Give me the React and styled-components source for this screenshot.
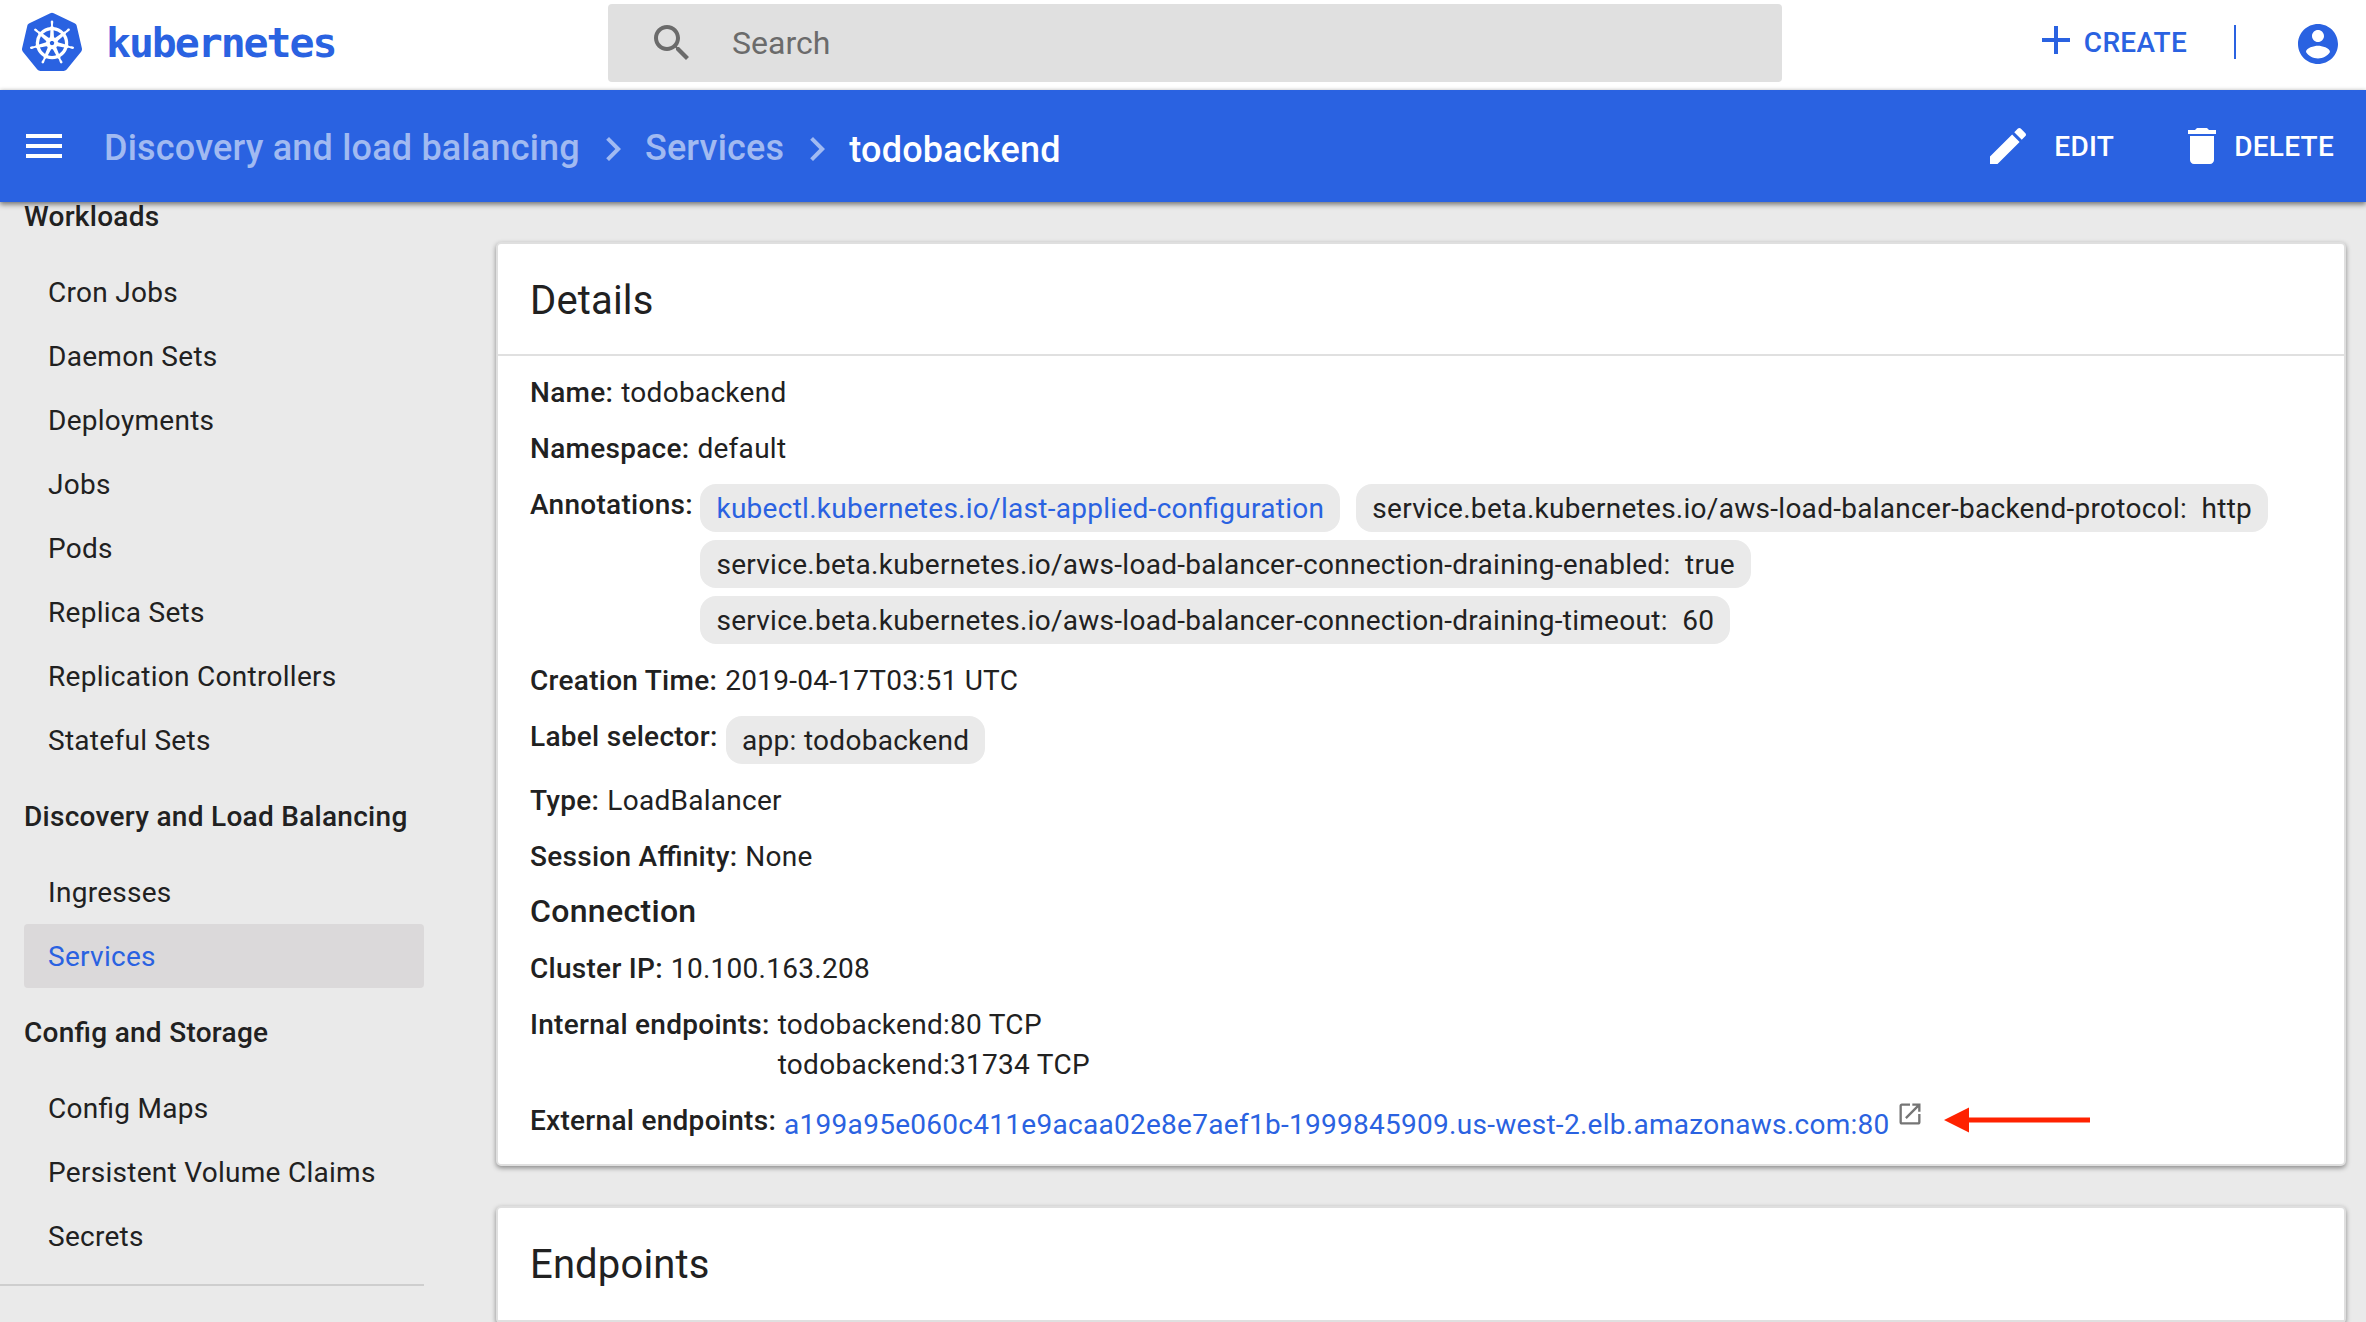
import React from "react";
import styled, { createGlobalStyle } from "styled-components";
import { SiKubernetes } from "react-icons/si";

const blue = "#2a62e1";
const ink = "#212121";

const GlobalStyle = createGlobalStyle`
  * { box-sizing: border-box; }
  body {
    margin: 0;
    background: #eaeaea;
    color: ${ink};
    font-family: Roboto, "Liberation Sans", sans-serif;
    font-size: 28px;
    letter-spacing: 0.28px;
    font-feature-settings: "liga" 1;
  }
`;

const Page = styled.div`
  display: flex;
  flex-direction: column;
  width: 2366px;
  height: 1322px;
  overflow: hidden;
`;

const TopBar = styled.header`
  display: flex;
  align-items: center;
  flex: none;
  height: 90px;
  background: #fff;
`;

const Brand = styled.a`
  display: flex;
  align-items: center;
  width: 608px;
  height: 84px;
  padding-left: 22px;
  align-self: flex-start;
  color: ${blue};
`;

const Wordmark = styled.span`
  margin: 1px 0 0 24px;
  font: bold 41.5px "DejaVu Sans Mono", monospace;
  letter-spacing: -2.05px;
`;

const SearchBox = styled.div`
  display: flex;
  align-items: center;
  align-self: flex-start;
  width: 1174px;
  height: 78px;
  margin-top: 4px;
  padding: 0 40px;
  border-radius: 4px;
  background: #e0e0e0;
  color: #6b6b6b;
  font-size: 32px;
  letter-spacing: 0;
`;

const SearchText = styled.span`
  margin-left: 36px;
`;

const Icon = styled.svg`
  flex: none;
  width: ${(p) => p.$size || 48}px;
  height: ${(p) => p.$size || 48}px;
  fill: currentColor;
`;

const AddIcon = styled(Icon)`
  margin-top: -4px;
`;

const TopActions = styled.div`
  display: flex;
  align-items: center;
  align-self: flex-start;
  height: 84px;
  margin-left: auto;
  padding: 4px 24px 0 0;
  color: ${blue};
`;

const Action = styled.button`
  display: flex;
  align-items: center;
  gap: ${(p) => p.$gap}px;
  margin-top: ${(p) => (p.$raise ? -4 : 0)}px;
  padding: 0;
  border: 0;
  background: none;
  color: inherit;
  font: 500 28px Roboto, sans-serif;
  letter-spacing: 0.28px;
`;

const Separator = styled.i`
  width: 2px;
  height: 34px;
  margin: -4px 58px 0 47px;
  background: ${blue};
`;

const ActionBar = styled.nav`
  display: flex;
  align-items: center;
  flex: none;
  height: 112px;
  padding: 0 32px 0 20px;
  background: ${blue};
  color: #fff;
  box-shadow: 0 0 4px rgba(0, 0, 0, 0.2), 0 3px 5px rgba(0, 0, 0, 0.4);
  z-index: 1;
`;

const Crumbs = styled.div`
  display: flex;
  align-items: center;
  margin: 4px 0 0 36px;
  font-size: 36px;
  font-weight: 500;
  letter-spacing: 0.2px;
  line-height: 48px;
`;

const Crumb = styled.span`
  padding-top: ${(p) => (p.$current ? 4 : 0)}px;
  color: ${(p) => (p.$current ? "#fff" : "rgba(255, 255, 255, 0.56)")};
`;

const CrumbArrow = styled(Icon)`
  margin: 2px 8px 0 9px;
  color: rgba(255, 255, 255, 0.56);
`;

const BarActions = styled.div`
  display: flex;
  align-items: center;
  gap: 64px;
  height: 100%;
  margin-left: auto;
`;

const Body = styled.div`
  display: flex;
  flex: 1;
  min-height: 0;
`;

const Sidebar = styled.aside`
  flex: none;
  width: 424px;
`;

const NavList = styled.div`
  padding-bottom: 16px;
  border-bottom: 2px solid #cecece;
`;

const NavHeading = styled.div`
  height: ${(p) => (p.$first ? 58 : 88)}px;
  padding-left: 24px;
  font-weight: 500;
  line-height: ${(p) => (p.$first ? 30 : 90)}px;
`;

const NavItem = styled.a`
  display: block;
  height: 64px;
  margin-left: 24px;
  padding-left: 24px;
  border-radius: 4px;
  line-height: 66px;
  background: ${(p) => (p.$active ? "#dbd9da" : "transparent")};
  color: ${(p) => (p.$active ? blue : ink)};
`;

const Content = styled.main`
  display: flex;
  flex-direction: column;
  flex: 1;
  gap: 40px;
  padding: 40px 20px 0 72px;
`;

const Card = styled.section`
  flex: none;
  border: 2px solid #dfdfdf;
  border-radius: 5px;
  background: #fff;
  box-shadow: 0 2px 5px rgba(0, 0, 0, 0.42);
`;

const CardTitle = styled.h2`
  height: ${(p) => p.$height || 112}px;
  margin: 0;
  padding-left: 32px;
  border-bottom: 2px solid #e0e0e0;
  font-size: 40px;
  font-weight: 400;
  letter-spacing: 0.15px;
  line-height: 114px;
`;

const CardBody = styled.div`
  display: flex;
  flex-direction: column;
  gap: 16px;
  padding: 16px 32px;
  line-height: 42px;
`;

const Entry = styled.div`
  display: flex;
  gap: 8px;
`;

const Label = styled.span`
  flex: none;
  height: 40px;
  font-weight: 500;
`;

const Value = styled.span`
  display: block;
  height: 40px;
`;

const SubTitle = styled.h3`
  height: 40px;
  margin: 0;
  font-size: 32px;
  font-weight: 500;
  line-height: 38px;
  letter-spacing: 0.32px;
`;

const ChipList = styled.div`
  display: flex;
  flex-wrap: wrap;
  gap: 8px 16px;
  margin-left: -1px;
`;

const Chip = styled.span`
  height: 48px;
  padding: 4px 15.5px 0 16.5px;
  border-radius: 16px;
  background: #eaeaea;
  white-space: pre;
  color: ${(p) => (p.$link ? blue : ink)};
`;

const Lines = styled.div`
  display: flex;
  flex-direction: column;
`;

const Endpoint = styled.a`
  display: flex;
  height: 48px;
  padding-top: 4px;
  color: ${blue};
`;

const OpenIcon = styled(Icon)`
  margin: -4px 0 0 6px;
  color: #757575;
`;

const Arrow = styled.svg`
  flex: none;
  width: 146px;
  height: 26px;
  margin: 7px 0 0 12px;
`;

const paths = {
  search:
    "M15.5 14h-.79l-.28-.27C15.41 12.59 16 11.11 16 9.5 16 5.91 13.09 3 9.5 3S3 5.91 3 9.5 5.91 16 9.5 16c1.61 0 3.09-.59 4.23-1.57l.27.28v.79l5 4.99L20.49 19l-4.99-5zm-6 0C7.01 14 5 11.99 5 9.5S7.01 5 9.5 5 14 7.01 14 9.5 11.99 14 9.5 14z",
  add: "M19 13h-6v6h-2v-6H5v-2h6V5h2v6h6v2z",
  account:
    "M12 2C6.48 2 2 6.48 2 12s4.48 10 10 10 10-4.48 10-10S17.52 2 12 2zm0 3c1.66 0 3 1.34 3 3s-1.34 3-3 3-3-1.34-3-3 1.34-3 3-3zm0 14.2c-2.5 0-4.71-1.28-6-3.22.03-1.99 4-3.08 6-3.08 1.99 0 5.97 1.09 6 3.08-1.29 1.94-3.5 3.22-6 3.22z",
  menu: "M3 18h18v-2H3v2zm0-5h18v-2H3v2zm0-7v2h18V6H3z",
  chevron: "M10 6L8.59 7.41 13.17 12l-4.58 4.59L10 18l6-6z",
  edit: "M3 17.25V21h3.75L17.81 9.94l-3.75-3.75L3 17.25zM20.71 7.04c.39-.39.39-1.02 0-1.41l-2.34-2.34c-.39-.39-1.02-.39-1.41 0l-1.83 1.83 3.75 3.75 1.83-1.83z",
  trash: "M6 19c0 1.1.9 2 2 2h8c1.1 0 2-.9 2-2V7H6v12zM19 4h-3.5l-1-1h-5l-1 1H5v2h14V4z",
  open: "M19 19H5V5h7V3H5c-1.11 0-2 .9-2 2v14c0 1.1.89 2 2 2h14c1.1 0 2-.9 2-2v-7h-2v7zM14 3v2h3.59l-9.83 9.83 1.41 1.41L19 6.41V10h2V3h-7z",
};

const Glyph = ({ name, as: Part = Icon, size }) => (
  <Part viewBox="0 0 24 24" $size={size}>
    <path d={paths[name]} />
  </Part>
);

const groups = [
  {
    title: "Workloads",
    items: [
      "Cron Jobs",
      "Daemon Sets",
      "Deployments",
      "Jobs",
      "Pods",
      "Replica Sets",
      "Replication Controllers",
      "Stateful Sets",
    ],
  },
  { title: "Discovery and Load Balancing", items: ["Ingresses", "Services"] },
  { title: "Config and Storage", items: ["Config Maps", "Persistent Volume Claims", "Secrets"] },
];

const annotations = [
  ["service.beta.kubernetes.io/aws-load-balancer-backend-protocol", "http"],
  ["service.beta.kubernetes.io/aws-load-balancer-connection-draining-enabled", "true"],
  ["service.beta.kubernetes.io/aws-load-balancer-connection-draining-timeout", "60"],
];

const Field = ({ label, children }) => (
  <Entry>
    <Label>{label}:</Label>
    {typeof children === "string" ? <Value>{children}</Value> : children}
  </Entry>
);

export default function App() {
  return (
    <Page>
      <GlobalStyle />
      <TopBar>
        <Brand>
          <SiKubernetes size={60} />
          <Wordmark>kubernetes</Wordmark>
        </Brand>
        <SearchBox>
          <Glyph name="search" />
          <SearchText>Search</SearchText>
        </SearchBox>
        <TopActions>
          <Action $gap={4} $raise>
            <Glyph name="add" as={AddIcon} />
            CREATE
          </Action>
          <Separator />
          <Glyph name="account" />
        </TopActions>
      </TopBar>
      <ActionBar>
        <Glyph name="menu" />
        <Crumbs>
          <Crumb>Discovery and load balancing</Crumb>
          <Glyph name="chevron" as={CrumbArrow} />
          <Crumb>Services</Crumb>
          <Glyph name="chevron" as={CrumbArrow} />
          <Crumb $current>todobackend</Crumb>
        </Crumbs>
        <BarActions>
          <Action $gap={22}>
            <Glyph name="edit" />
            EDIT
          </Action>
          <Action $gap={8}>
            <Glyph name="trash" />
            DELETE
          </Action>
        </BarActions>
      </ActionBar>
      <Body>
        <Sidebar>
          <NavList>
            {groups.map((group, index) => (
              <React.Fragment key={group.title}>
                <NavHeading $first={index === 0}>{group.title}</NavHeading>
                {group.items.map((item) => (
                  <NavItem key={item} $active={item === "Services"}>
                    {item}
                  </NavItem>
                ))}
              </React.Fragment>
            ))}
          </NavList>
        </Sidebar>
        <Content>
          <Card>
            <CardTitle>Details</CardTitle>
            <CardBody>
              <Field label="Name">todobackend</Field>
              <Field label="Namespace">default</Field>
              <Field label="Annotations">
                <ChipList>
                  <Chip $link>kubectl.kubernetes.io/last-applied-configuration</Chip>
                  {annotations.map(([key, value]) => (
                    <Chip key={key}>{`${key}:  ${value}`}</Chip>
                  ))}
                </ChipList>
              </Field>
              <Field label="Creation Time">2019-04-17T03:51 UTC</Field>
              <Field label="Label selector">
                <Chip>app: todobackend</Chip>
              </Field>
              <Field label="Type">LoadBalancer</Field>
              <Field label="Session Affinity">None</Field>
              <SubTitle>Connection</SubTitle>
              <Field label="Cluster IP">10.100.163.208</Field>
              <Field label="Internal endpoints">
                <Lines>
                  <Value>todobackend:80 TCP</Value>
                  <Value>todobackend:31734 TCP</Value>
                </Lines>
              </Field>
              <Field label="External endpoints">
                <Endpoint>
                  a199a95e060c411e9acaa02e8e7aef1b-1999845909.us-west-2.elb.amazonaws.com:80
                  <Glyph name="open" as={OpenIcon} size={28} />
                </Endpoint>
                <Arrow viewBox="0 0 146 26">
                  <path fill="#ff2200" d="M0 13L25 0.5V10.5H146V15.5H25V25.5Z" />
                </Arrow>
              </Field>
            </CardBody>
          </Card>
          <Card>
            <CardTitle $height={114}>Endpoints</CardTitle>
          </Card>
        </Content>
      </Body>
    </Page>
  );
}
